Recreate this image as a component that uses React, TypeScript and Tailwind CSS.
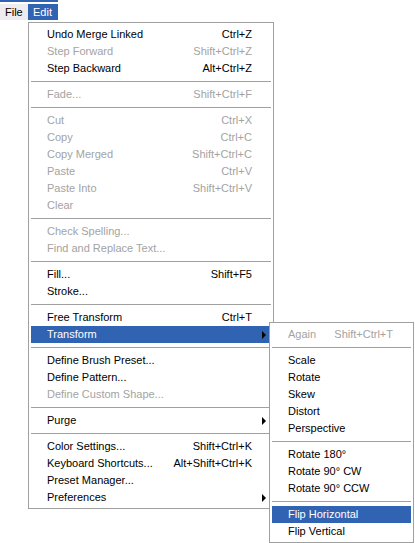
import React from "react";

type Item =
    | { sep: true }
    | {
          label: string;
          shortcut?: string;
          disabled?: boolean;
          sub?: boolean;
          active?: boolean;
      };

const editItems: Item[] = [
    { label: "Undo Merge Linked", shortcut: "Ctrl+Z" },
    { label: "Step Forward", shortcut: "Shift+Ctrl+Z", disabled: true },
    { label: "Step Backward", shortcut: "Alt+Ctrl+Z" },
    { sep: true },
    { label: "Fade...", shortcut: "Shift+Ctrl+F", disabled: true },
    { sep: true },
    { label: "Cut", shortcut: "Ctrl+X", disabled: true },
    { label: "Copy", shortcut: "Ctrl+C", disabled: true },
    { label: "Copy Merged", shortcut: "Shift+Ctrl+C", disabled: true },
    { label: "Paste", shortcut: "Ctrl+V", disabled: true },
    { label: "Paste Into", shortcut: "Shift+Ctrl+V", disabled: true },
    { label: "Clear", disabled: true },
    { sep: true },
    { label: "Check Spelling...", disabled: true },
    { label: "Find and Replace Text...", disabled: true },
    { sep: true },
    { label: "Fill...", shortcut: "Shift+F5" },
    { label: "Stroke..." },
    { sep: true },
    { label: "Free Transform", shortcut: "Ctrl+T" },
    { label: "Transform", sub: true, active: true },
    { sep: true },
    { label: "Define Brush Preset..." },
    { label: "Define Pattern..." },
    { label: "Define Custom Shape...", disabled: true },
    { sep: true },
    { label: "Purge", sub: true },
    { sep: true },
    { label: "Color Settings...", shortcut: "Shift+Ctrl+K" },
    { label: "Keyboard Shortcuts...", shortcut: "Alt+Shift+Ctrl+K" },
    { label: "Preset Manager..." },
    { label: "Preferences", sub: true },
];

const transformItems: Item[] = [
    { label: "Again", shortcut: "Shift+Ctrl+T", disabled: true },
    { sep: true },
    { label: "Scale" },
    { label: "Rotate" },
    { label: "Skew" },
    { label: "Distort" },
    { label: "Perspective" },
    { sep: true },
    { label: "Rotate 180°" },
    { label: "Rotate 90° CW" },
    { label: "Rotate 90° CCW" },
    { sep: true },
    { label: "Flip Horizontal", active: true },
    { label: "Flip Vertical" },
];

const MenuList = ({ items, pr }: { items: Item[]; pr: string }) => (
    <div className="flex flex-col px-[2px] pt-[3px] pb-[2px]">
        {items.map((item, i) => {
            if ("sep" in item) {
                return (
                    <div key={i} className="h-[9px] flex items-center">
                        <div className="h-px w-full bg-[#a0a0a0]" />
                    </div>
                );
            }
            const color = item.active
                ? "bg-[#3163b3] text-white"
                : item.disabled
                  ? "text-[#a3a3a3]"
                  : "text-black";
            return (
                <div
                    key={i}
                    className={`relative flex items-center h-[17px] pl-[16px] ${pr} whitespace-nowrap ${color}`}
                >
                    <span className="flex-1">{item.label}</span>
                    {item.shortcut && <span>{item.shortcut}</span>}
                    {item.sub && (
                        <span className="absolute right-[5px] top-[5px] w-0 h-0 border-y-[4px] border-y-transparent border-l-[4px] border-l-black" />
                    )}
                </div>
            );
        })}
    </div>
);

export default function App() {
    return (
        <div
            className="relative w-[415px] h-[543px] bg-white overflow-hidden text-[11px] leading-none"
            style={{ fontFamily: '"Liberation Sans", Arial, sans-serif' }}
        >
            <div className="w-[58px] h-[2px] bg-[#3163b3]" />
            <div className="flex mt-[2px] h-[16px]">
                <div className="w-[28px] pl-[5px] flex items-center bg-[#eeecef] text-black">
                    File
                </div>
                <div className="w-[30px] pl-[5px] flex items-center bg-[#3163b3] text-white">
                    Edit
                </div>
            </div>

            <div className="mt-[2px] ml-[28px] w-[246px] border border-[#a0a0a0] bg-white">
                <MenuList items={editItems} pr="pr-[19px]" />
            </div>

            <div className="absolute left-[269px] top-[322px] w-[145px] border border-[#a0a0a0] bg-white">
                <MenuList items={transformItems} pr="pr-[18px]" />
            </div>
        </div>
    );
}
